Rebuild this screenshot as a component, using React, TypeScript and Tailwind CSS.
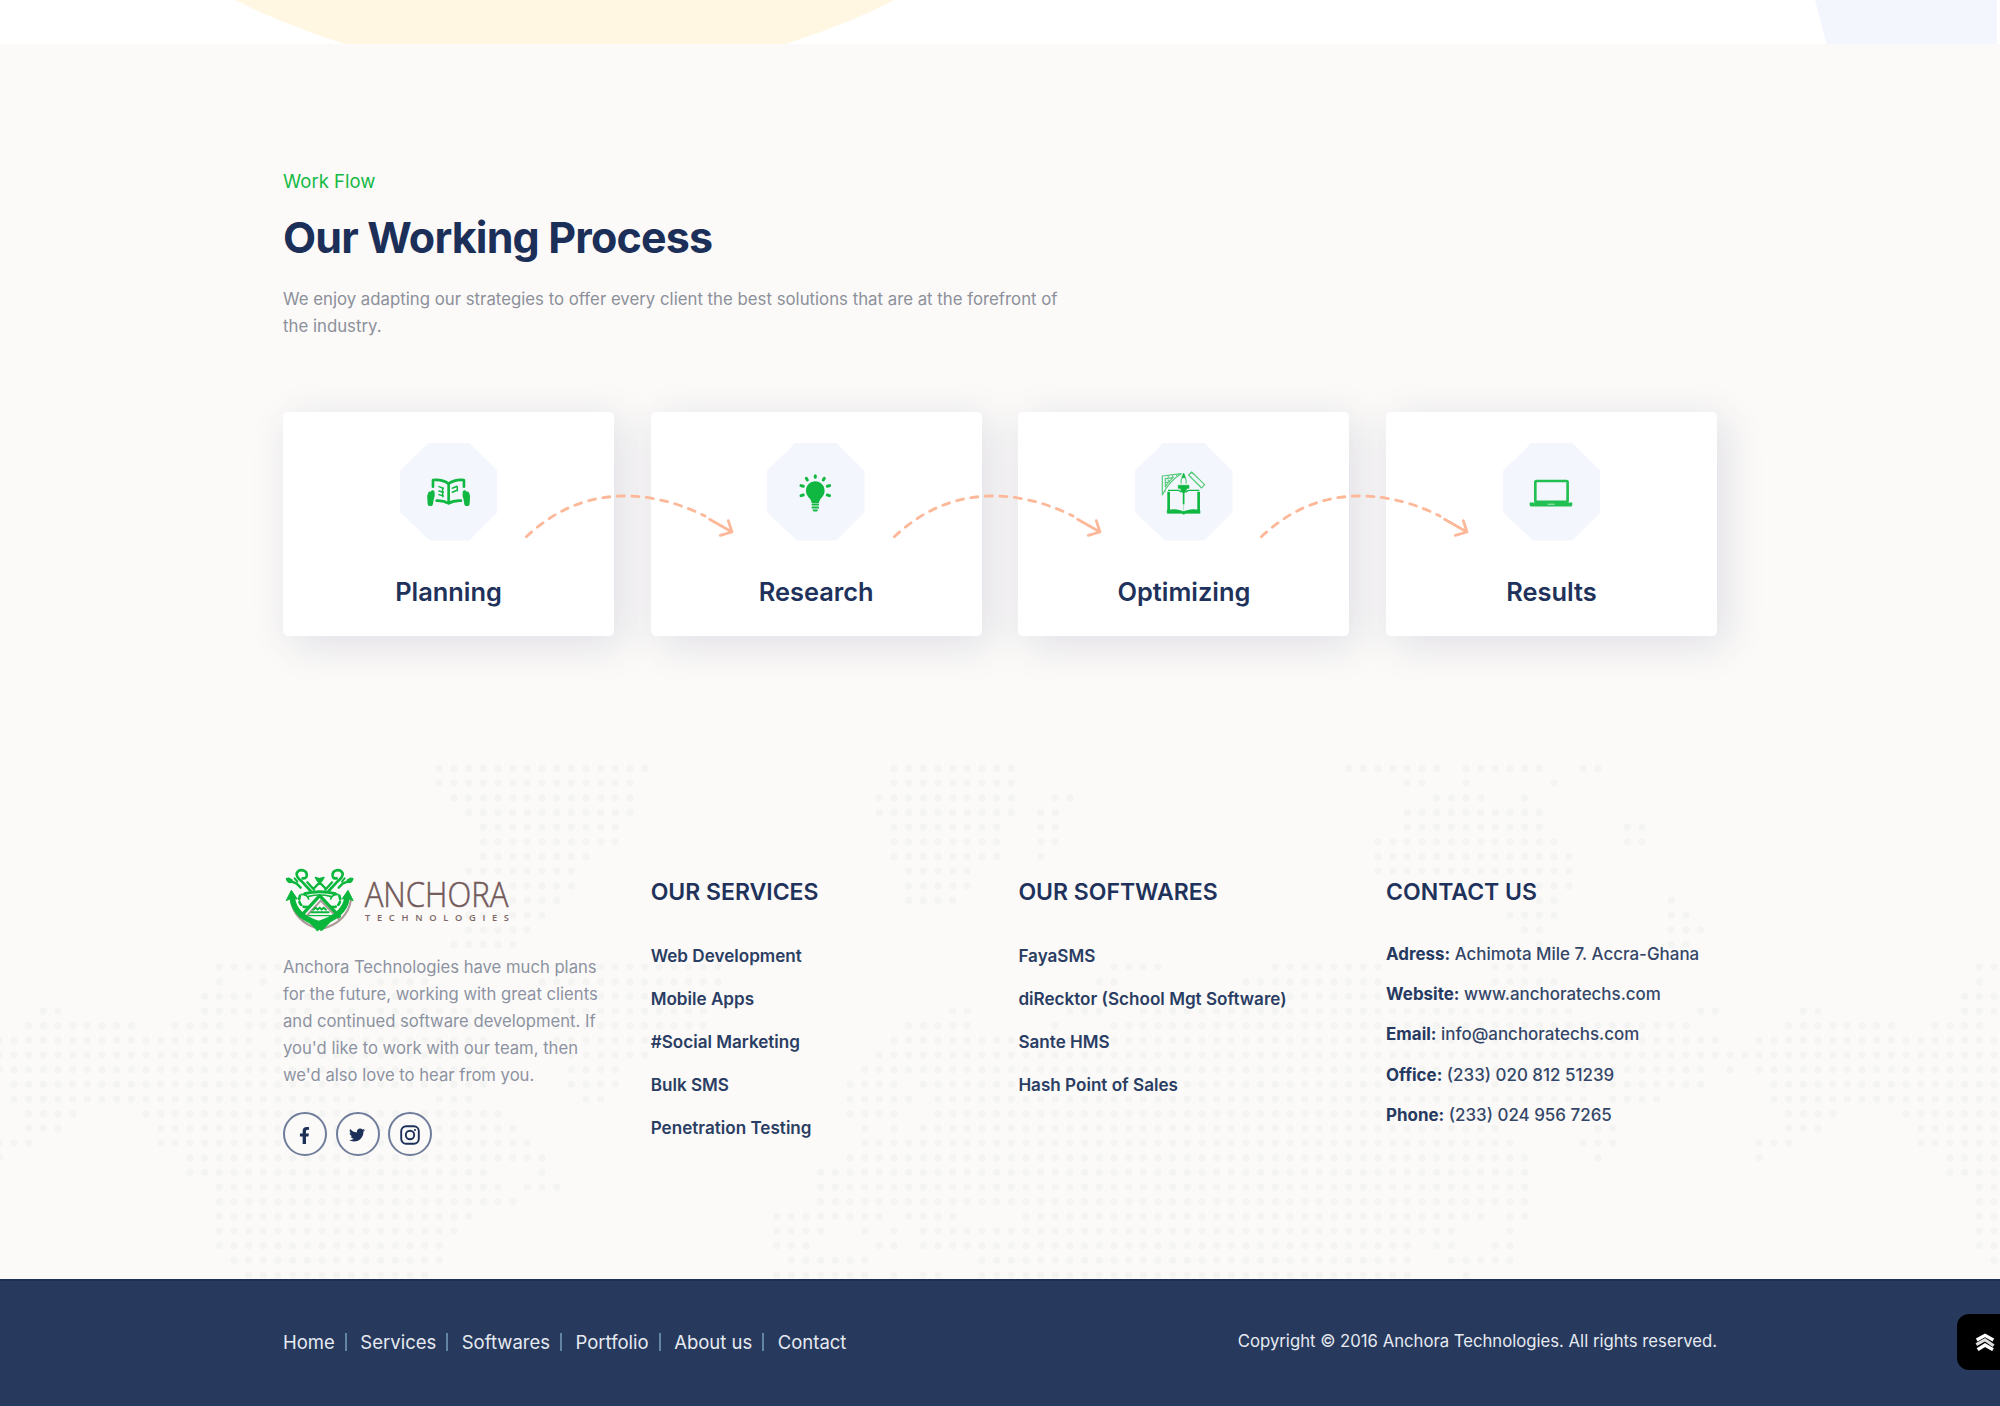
import type { ReactNode } from "react";
import { FaFacebookF, FaTwitter } from "react-icons/fa";

const PITCH = 14.667;

/* Dotted world map: each row lists runs of grid columns that carry a dot. */
const UPPER_ROWS = [
  "30-44 61-69 92-98 100-105 108-109",
  "30-43 61-69 96-97 100 106",
  "31-43 60-69 72-73 98-101 104",
  "32-43 60-69 71-72 96-105",
  "33-42 61-68 71-72 96-105 111-112",
  "33-42 61-68 71-72 94-106 111-112",
  "33-40 61-68 71 94-107",
  "32-39 62-66 94-107",
  "32-39 62-66 105-107",
  "33-38 62-65 105-106 114",
  "32-37 103-106 114-115",
  "32-36 104-105 114-116",
  "31-35 105 114-115",
];

const LOWER_ROWS = [
  "15-19 41-49 76-79 87-94 102-104 135-136",
  "15 18 26-29 37-49 75-76 85-94 102-106 135",
  "14-17 19-22 27-31 40-48 86-105 134-136",
  "14-21 23-24 26-32 38-48 3-4 65-66 73-75 78-107 116-117 123-124 134-136",
  "2-9 12-15 17-33 38-48 62-66 72 76-115 122-129 132-135",
  "0-17 19-33 38-44 61-117 120-136",
  "0-33 39-44 60-119 120-136",
  "0-33 39-42 59-116 118 120-136",
  "1-33 39-42 58-61 63-116 121-136",
  "1-24 30-32 40-41 58-62 64-108 110-113 121-136",
  "2-5 10-34 58-61 64-103 122-125 130-136",
  "2-4 11-35 59 61 63-102 109-110 122-124 131-136",
  "0-2 11-36 59-103 108-110 120-122 131-136",
  "0 13-37 58-104 109 120 133-136",
  "13-33 37 56-104 133-136",
  "15-34 36-38 56-104 135-136",
  "15-35 56-104 135-136",
  "15-32 53-60 62-65 70-101 103-104 135-136",
  "15-31 53-56 59 61 63-99 103 135-136",
  "15-30 53-55 60-61 63-96 98-99 102-103 135-136",
  "16-30 54-59 67-96 99-103 136",
  "17-29 53-59 61 63-64 67-96 100",
];

function expand(row: string) {
  return row.split(" ").flatMap((run) => {
    const [from, to = from] = run.split("-").map(Number);
    return Array.from({ length: to - from + 1 }, (_, i) => from + i);
  });
}

function DottedMap() {
  const rows = [
    ...UPPER_ROWS.map((row, i) => ({ y: 18.4 + i * PITCH, row })),
    ...LOWER_ROWS.map((row, i) => ({ y: 217 + i * PITCH, row })),
  ];
  return (
    <svg className="pointer-events-none absolute inset-0 h-full w-full" fill="#f4f4f3" aria-hidden="true">
      {rows.map(({ y, row }) =>
        expand(row).map((k) => <circle key={`${y}-${k}`} cx={k * PITCH - 0.7} cy={y} r="3.6" />),
      )}
    </svg>
  );
}

function BookIcon() {
  return (
    <g fill="none" stroke="#10b841" strokeLinecap="round" strokeLinejoin="round">
      <path strokeWidth="8" d="M99 131V111Q127 108 146 122Q165 108 192 111V131" />
      <path strokeWidth="8" d="M146 122V181M110 173Q131 172 146 181Q161 172 183 173" />
      <path strokeWidth="4.5" d="M117 131l13 5M117 144l13 4M117 155l13 4M128 137v24M157 136l14-6M157 148l14-6M172 131v12" />
      <path strokeWidth="12" d="M90 152Q86 160 88 168L89 183M98 148Q100 160 95 170L93 183M202 152Q206 160 204 168L203 183M194 148Q192 160 197 170L199 183" />
    </g>
  );
}

function BulbIcon() {
  return (
    <g fill="#10b841">
      <path d="M145 115c-15 0-28 12-28 28 0 12 8 19 13 26 3 5 3 8 4 11h22c1-3 1-6 4-11 5-7 13-14 13-26 0-16-13-28-28-28z" />
      <rect x="134" y="182" width="22" height="6" rx="2" />
      <rect x="134" y="191" width="22" height="6" rx="2" />
      <path d="M136 200h18l-4 6h-10z" />
      <path stroke="#10b841" strokeWidth="9" strokeLinecap="round" d="M145 98v5M118 106l3 5M172 106l-3 5M102 128l7 2M188 128l-7 2M102 158l7-2M188 158l-7-2" />
    </g>
  );
}

function DesignIcon() {
  return (
    <g fill="none" stroke="#10b841" strokeLinejoin="round">
      <g strokeWidth="3.500" opacity=".7">
        <path d="M82 156V99L139 92Q104 112 82 156z" />
        <path d="M91 132V107L115 104Q101 114 91 132z" />
        <path d="M87 145h5M98 110l8 8M113 97v5M100 99v4M125 95v4M93 118h6" />
        <path d="M161 96l9-9 39 38-9 10zM169 88l4 5" />
        <path d="M139 122q-3-10 7-30q10 20 7 30" />
      </g>
      <path strokeWidth="3.500" d="M99 142h32l8 6M193 142h-32l-8 6" />
      <path strokeWidth="8" d="M101 146V207M191 146V207" />
      <path fill="#10b841" strokeWidth="2" d="M97 202q26-6 49 4q23-10 49-4v9h-42l-7 3l-7-3H97z" />
      <path fill="#10b841" strokeWidth="2" d="M130 127h32v9h-6l-4 11q-6 5-12 0l-4-11h-6zM142 104l4-13l4 13z" />
      <path strokeWidth="5" d="M146 147V184" />
      <path strokeWidth="2" opacity=".5" d="M146 184V204" />
    </g>
  );
}

function LaptopIcon() {
  return (
    <g>
      <rect x="97" y="114" width="97" height="63" rx="4" fill="none" stroke="#22bf52" strokeWidth="8" />
      <path fill="#22bf52" d="M80 179h128v7q0 5-6 5H86q-6 0-6-5z" />
      <rect x="134" y="182" width="21" height="4" fill="#8fdfa8" />
    </g>
  );
}

function Octagon({ children }: { children: ReactNode }) {
  return (
    <svg viewBox="0 0 293 293" className="h-[97.6px] w-[97.6px]" aria-hidden="true">
      <path fill="#f3f6fd" d="M85 0H208L293 83V208L208 293H90L0 208V83z" />
      {children}
    </svg>
  );
}

function Arrow() {
  return (
    <svg
      viewBox="760 280 640 140"
      className="absolute top-[81px] left-[240px] z-10 h-[46.7px] w-[213.3px]"
      fill="none"
      stroke="#fdb899"
      strokeWidth="8.500"
      strokeLinecap="round"
      strokeLinejoin="round"
      aria-hidden="true"
    >
      <path strokeDasharray="21 22.6" d="M770 411C870 318 970 288 1072 289C1160 290 1240 316 1306 349" />
      <path d="M1320 359L1387 397M1376 363L1387 397L1352 407" />
    </svg>
  );
}

const steps: { title: string; icon: ReactNode }[] = [
  { title: "Planning", icon: <BookIcon /> },
  { title: "Research", icon: <BulbIcon /> },
  { title: "Optimizing", icon: <DesignIcon /> },
  { title: "Results", icon: <LaptopIcon /> },
];

function AnchorMark() {
  return (
    <g fill="none" strokeLinecap="round" strokeLinejoin="round">
      <g stroke="#6b4a45" strokeWidth="6" opacity=".55" transform="translate(3 3)">
        <path d="M14 92Q24 160 103 180Q182 160 194 92" />
        <path d="M103 94L50 152M103 94L160 152" />
      </g>
      <g stroke="#0bb63c">
        <path strokeWidth="17" d="M21 90Q28 144 100 166Q176 144 185 90" />
        <path fill="#0bb63c" strokeWidth="3" d="M3 96L18 66L36 92L20 90zM203 96L188 66L170 92L186 90z" />
        <path fill="#0bb63c" strokeWidth="3" d="M72 162L98 170L102 164L108 170L134 162L118 178L108 188L103 182L96 188L88 178z" />
        <path strokeWidth="10" d="M103 82L46 144M103 82L162 144" />
        <path strokeWidth="9" d="M58 76Q103 64 150 76" />
        <path strokeWidth="5" d="M70 84Q103 76 136 84" />
        <path strokeWidth="8" d="M76 68L50 40Q32 26 34 15Q40 3 52 6Q66 10 64 22Q62 32 52 30M130 68L156 40Q174 26 172 15Q166 3 154 6Q140 10 142 22Q144 32 154 30" />
        <path strokeWidth="7" d="M86 64L66 42M120 64L140 42M103 42L84 62M103 42L122 62" />
        <path fill="#0bb63c" strokeWidth="4" d="M90 27L102 31L116 27L110 38L103 42L96 38z" />
        <path strokeWidth="7" d="M5 32Q8 44 20 40L34 46L46 58M9 31l10 5M201 32Q198 44 186 40L172 46L160 58M197 31l-10 5" />
        <path strokeWidth="6" d="M28 30l8 10M178 30l-8 10" />
        <path strokeWidth="8" d="M44 82Q38 98 46 108Q56 120 68 114M162 82Q168 98 160 108Q150 120 138 114" strokeDasharray="10 9" />
        <path strokeWidth="5" d="M48 78Q66 78 70 92M158 78Q140 78 136 92" />
        <path strokeWidth="6" d="M84 124l7-6l6 6l6-6l6 6l6-6l7 6M78 132h52" />
        <path strokeWidth="4" d="M70 142h66" />
      </g>
    </g>
  );
}

function Logo() {
  return (
    <svg viewBox="38 46 690 204" className="h-[68px] w-[230px] overflow-visible" role="img" aria-label="Anchora Technologies">
      <g transform="translate(45 56)">
        <AnchorMark />
      </g>
      <text
        x="283"
        y="172.5"
        textLength="431"
        lengthAdjust="spacingAndGlyphs"
        strokeWidth="1.6"
        className="fill-[#735a5b] stroke-[#735a5b] font-['Open_Sans'] text-[102px] font-light"
      >
        ANCHORA
      </text>
      <text x="284" y="213.500" textLength="432" className="fill-[#7d6667] font-['Open_Sans'] text-[28px] font-semibold">
        TECHNOLOGIES
      </text>
    </svg>
  );
}

function InstagramGlyph() {
  return (
    <svg viewBox="0 0 20 20" className="h-[20px] w-[20px]" fill="none" stroke="currentColor" aria-hidden="true">
      <rect x="1.2" y="1.2" width="17.6" height="17.6" rx="5" strokeWidth="1.9" />
      <circle cx="10" cy="10" r="4.2" strokeWidth="1.9" />
      <circle cx="15" cy="5" r="1.1" fill="currentColor" stroke="none" />
    </svg>
  );
}

function SocialLink({ label, children }: { label: string; children: ReactNode }) {
  return (
    <a
      href="#"
      aria-label={label}
      className="flex h-11 w-11 items-center justify-center rounded-full border-2 border-[#6f7d9a] bg-[#fbfaf8] pt-[3px] pr-[1px] text-[#1b2f58]"
    >
      {children}
    </a>
  );
}

function FooterHeading({ children }: { children: ReactNode }) {
  return <h3 className="text-[23px] leading-[30px] font-semibold whitespace-nowrap">{children}</h3>;
}

function LinkColumn({ title, links }: { title: string; links: string[] }) {
  return (
    <div className="pt-[8px]">
      <FooterHeading>{title}</FooterHeading>
      <ul className="mt-[27px] text-[17.1px] leading-[43px] font-semibold whitespace-nowrap text-[#2a3d63]">
        {links.map((link) => (
          <li key={link}>
            <a href="#">{link}</a>
          </li>
        ))}
      </ul>
    </div>
  );
}

const contacts = [
  ["Adress:", "Achimota Mile 7. Accra-Ghana"],
  ["Website:", "www.anchoratechs.com"],
  ["Email:", "info@anchoratechs.com"],
  ["Office:", "(233) 020 812 51239"],
  ["Phone:", "(233) 024 956 7265"],
];

const nav = ["Home", "Services", "Softwares", "Portfolio", "About us", "Contact"];

export default function App() {
  return (
    <div className="relative flex h-[1406px] w-full flex-col overflow-hidden bg-[#fbfaf8] font-[Inter,sans-serif] text-[#1f325b]">
      <div className="h-11 shrink-0 bg-white">
        <svg className="h-11 w-full" aria-hidden="true">
          <circle cx="565" cy="-664" r="741.5" fill="#fff7e1" />
          <path d="M1815 0H1997V44H1826.500z" fill="#f3f6fd" />
        </svg>
      </div>

      <section className="h-[706px] shrink-0 px-[283px] pt-[123px]">
        <p className="text-[18.5px] leading-[28px] text-[#14b944]">Work Flow</p>
        <h2 className="mt-[16px] text-[43px] leading-[52px] font-bold tracking-[-0.84px] text-[#1b2f58]">
          Our Working Process
        </h2>
        <p className="mt-[23px] max-w-[790px] text-[16.8px] leading-[27px] text-[#8c909b]">
          We enjoy adapting our strategies to offer every client the best solutions that are at the forefront of the
          industry.
        </p>
        <div className="mt-[72px] grid grid-cols-[repeat(4,331px)] gap-[36.7px]">
          {steps.map((step, i) => (
            <div
              key={step.title}
              className="relative flex h-[223.500px] flex-col items-center rounded-[5px] bg-white pt-[31px] shadow-[8px_8px_40px_rgba(60,50,110,0.14)]"
            >
              <Octagon>{step.icon}</Octagon>
              <h3 className="mt-[33px] text-[25.4px] leading-[36px] font-semibold">{step.title}</h3>
              {i < steps.length - 1 && <Arrow />}
            </div>
          ))}
        </div>
      </section>

      <footer className="relative h-[529px] shrink-0">
        <DottedMap />
        <div className="relative grid grid-cols-[repeat(4,331px)] gap-[36.7px] px-[283px] pt-[119px]">
          <div className="-mt-[4px]">
            <Logo />
            <p className="mt-[20.500px] text-[16.65px] leading-[27px] whitespace-nowrap text-[#8c92a1]">
              Anchora Technologies have much plans
              <br />
              for the future, working with great clients
              <br />
              and continued software development. If
              <br />
              you'd like to work with our team, then
              <br />
              we'd also love to hear from you.
            </p>
            <div className="mt-[23px] flex gap-[8.7px]">
              <SocialLink label="Facebook">
                <FaFacebookF size={17} />
              </SocialLink>
              <SocialLink label="Twitter">
                <FaTwitter size={16} />
              </SocialLink>
              <SocialLink label="Instagram">
                <InstagramGlyph />
              </SocialLink>
            </div>
          </div>
          <LinkColumn
            title="OUR SERVICES"
            links={["Web Development", "Mobile Apps", "#Social Marketing", "Bulk SMS", "Penetration Testing"]}
          />
          <LinkColumn
            title="OUR SOFTWARES"
            links={["FayaSMS", "diRecktor (School Mgt Software)", "Sante HMS", "Hash Point of Sales"]}
          />
          <div className="pt-[8px]">
            <FooterHeading>CONTACT US</FooterHeading>
            <ul className="mt-[26.500px] text-[16.95px] leading-[40.4px] font-medium whitespace-nowrap text-[#344668]">
              {contacts.map(([label, value]) => (
                <li key={label}>
                  <b className="font-bold text-[#253961]">{label}</b> {value}
                </li>
              ))}
            </ul>
          </div>
        </div>
      </footer>

      <div className="flex h-[127px] shrink-0 items-center justify-between border-t-2 border-[#1b2f57] bg-[#27395d] px-[283px] pb-[4px] text-[#e6eaf1]">
        <nav className="flex items-center text-[18.5px] leading-[26px]">
          {nav.map((item, i) => (
            <div key={item} className="flex items-center">
              {i > 0 && <span className="mr-[13.500px] ml-[10px] h-[18px] w-[2px] bg-[#6384a3]" />}
              <a href="#">{item}</a>
            </div>
          ))}
        </nav>
        <p className="-mt-[2px] text-[16.7px] leading-[26px]">
          Copyright © 2016 Anchora Technologies. All rights reserved.
        </p>
      </div>

      <button
        aria-label="Back to top"
        className="absolute right-0 bottom-[36px] flex h-[56px] w-[43.500px] items-center rounded-l-[12px] bg-black pl-[18px]"
      >
        <svg viewBox="0 0 60 54" className="h-[18px] w-5" fill="none" stroke="#fff" strokeWidth="10" aria-hidden="true">
          <path d="M5 21L30 7L55 21" />
          <path d="M4 35L30 20L56 38" stroke="#ddd" strokeWidth="9" />
          <path d="M8 50L30 36L54 50" />
        </svg>
      </button>
    </div>
  );
}
